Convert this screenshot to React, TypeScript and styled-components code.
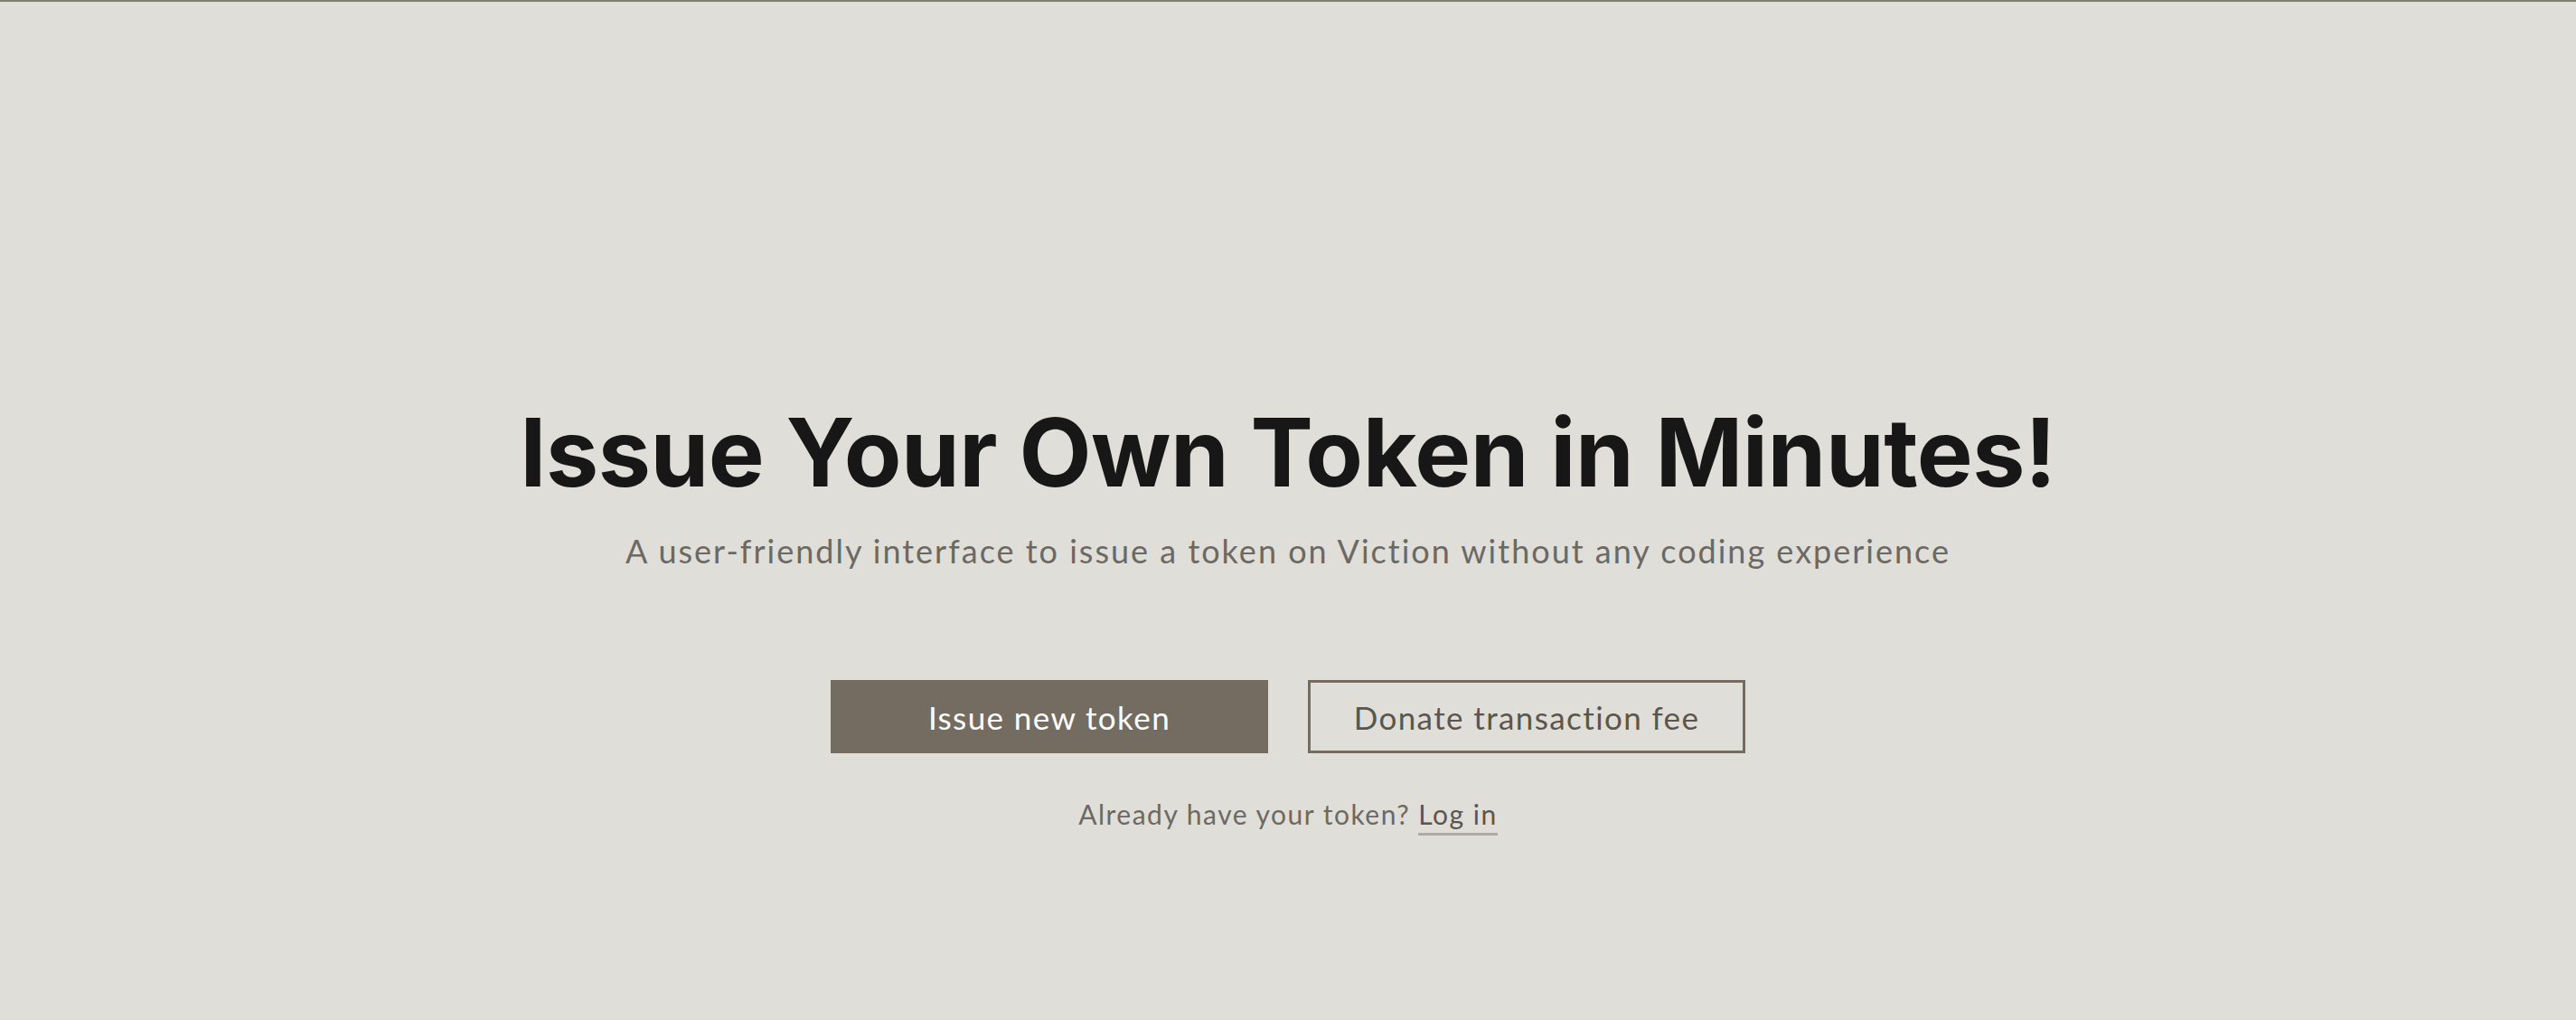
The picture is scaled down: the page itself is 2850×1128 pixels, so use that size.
import React from "react";
import styled, { createGlobalStyle } from "styled-components";

const GlobalStyle = createGlobalStyle`
  html, body {
    margin: 0;
    padding: 0;
    background: #dfded9;
  }
  * { box-sizing: border-box; }
`;

const Page = styled.main`
  min-height: 100vh;
  border-top: 2px solid #7f7f70;
  background: #dfded9;
  display: flex;
  flex-direction: column;
  align-items: center;
  padding-top: 446px;
  font-family: Lato, "Liberation Sans", sans-serif;
`;

const Title = styled.h1`
  margin: 0;
  font-family: Inter, "Liberation Sans", sans-serif;
  font-weight: 700;
  font-size: 104px;
  line-height: 104px;
  letter-spacing: -0.45px;
  color: #171717;
  white-space: nowrap;
`;

const Subtitle = styled.p`
  margin: 35px 0 0;
  font-size: 36px;
  line-height: 44px;
  font-weight: 400;
  letter-spacing: 2px;
  color: #6c6964;
  white-space: nowrap;
`;

const Actions = styled.div`
  display: flex;
  gap: 44px;
  margin-top: 121px;
`;

const Button = styled.button<{ $variant: "solid" | "outline" }>`
  width: 484px;
  height: 81px;
  display: flex;
  align-items: center;
  justify-content: center;
  font-family: Lato, "Liberation Sans", sans-serif;
  font-size: 35px;
  font-weight: 400;
  letter-spacing: 1.4px;
  cursor: pointer;
  border: 3px solid #746c60;
  background: ${(p) => (p.$variant === "solid" ? "#746c60" : "transparent")};
  color: ${(p) => (p.$variant === "solid" ? "#ffffff" : "#5c554c")};
`;

const LoginLine = styled.p`
  margin: 49px 0 0;
  font-size: 30px;
  line-height: 36px;
  letter-spacing: 1.5px;
  color: #6c6964;
`;

const LoginLink = styled.a`
  color: #5c554c;
  text-decoration: none;
  padding-bottom: 3px;
  border-bottom: 3px solid #b0aaa4;
  cursor: pointer;
`;

export default function App() {
  return (
    <>
      <GlobalStyle />
      <Page>
        <Title>Issue Your Own Token in Minutes!</Title>
        <Subtitle>
          A user-friendly interface to issue a token on Viction without any coding experience
        </Subtitle>
        <Actions>
          <Button $variant="solid">Issue new token</Button>
          <Button $variant="outline">Donate transaction fee</Button>
        </Actions>
        <LoginLine>
          Already have your token? <LoginLink>Log in</LoginLink>
        </LoginLine>
      </Page>
    </>
  );
}
